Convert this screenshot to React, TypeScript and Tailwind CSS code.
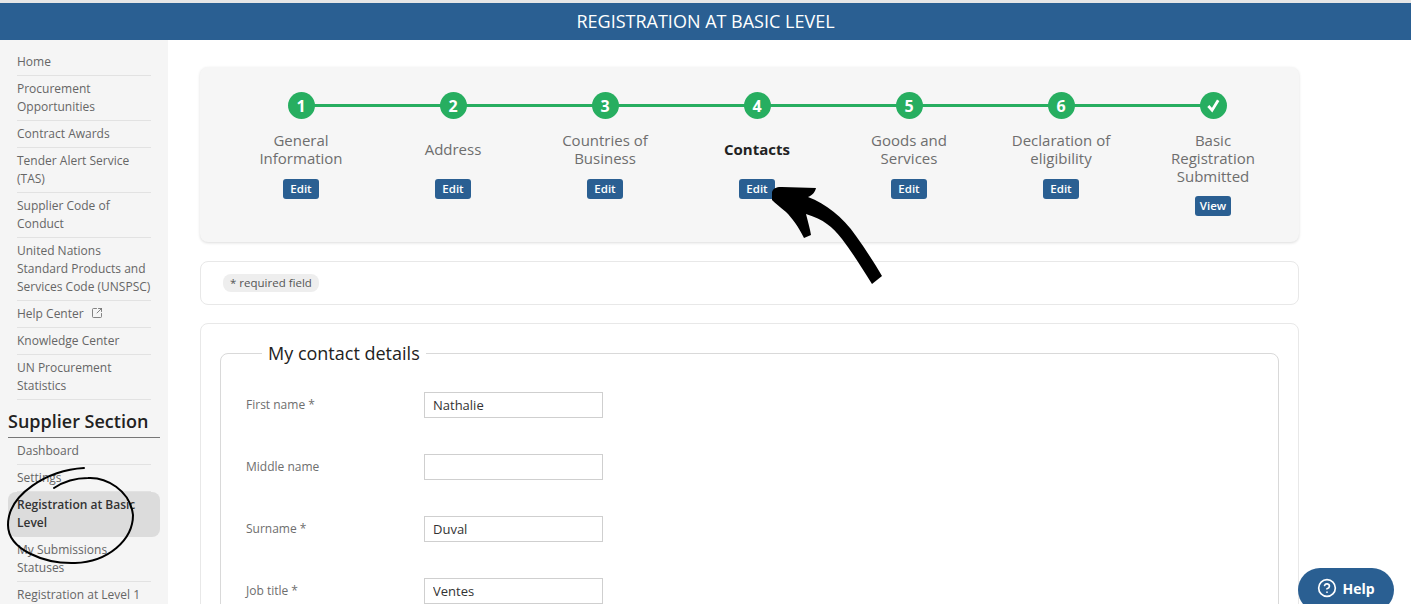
import { CircleHelp, SquareArrowOutUpRight } from "lucide-react";

const topLinks = [
  "Home",
  "Procurement Opportunities",
  "Contract Awards",
  "Tender Alert Service (TAS)",
  "Supplier Code of Conduct",
  "United Nations Standard Products and Services Code (UNSPSC)",
  "Help Center",
  "Knowledge Center",
  "UN Procurement Statistics",
];

const supplierLinks = [
  "Dashboard",
  "Settings",
  "Registration at Basic Level",
  "My Submissions Statuses",
  "Registration at Level 1",
  "Registration at Level 2",
];

const steps = [
  { mark: "1", label: "General Information", action: "Edit" },
  { mark: "2", label: "Address", action: "Edit" },
  { mark: "3", label: "Countries of Business", action: "Edit" },
  { mark: "4", label: "Contacts", action: "Edit", current: true },
  { mark: "5", label: "Goods and Services", action: "Edit" },
  { mark: "6", label: "Declaration of eligibility", action: "Edit" },
  { mark: "check", label: "Basic Registration Submitted", action: "View" },
];

const fields = [
  { label: "First name *", value: "Nathalie" },
  { label: "Middle name", value: "" },
  { label: "Surname *", value: "Duval" },
  { label: "Job title *", value: "Ventes" },
];

function SideLink({ label }: { label: string }) {
  if (label === "Registration at Basic Level") {
    return (
      <li className="rounded-lg bg-[#dcdcdc] px-[9px] py-[4px] pb-[5px] font-semibold text-[#333]">
        {label}
      </li>
    );
  }
  return (
    <li className="mx-[9px] border-b border-[#e2e2e2] py-[4px]">
      {label}
      {label === "Help Center" && (
        <SquareArrowOutUpRight className="ml-[7px] inline-block h-[12px] w-[12px] -translate-y-[2px]" strokeWidth={1.6} />
      )}
    </li>
  );
}

function Sidebar() {
  return (
    <aside className="w-[168px] shrink-0 bg-[#f5f5f5] px-[8px] pt-[9px] text-[12px] leading-[18px] text-[#666]">
      <ul>
        {topLinks.map((label) => (
          <SideLink key={label} label={label} />
        ))}
      </ul>
      <h2 className="mt-[9px] border-b border-[#777] pb-[3px] text-[18px] leading-[25px] font-semibold text-[#222]">
        Supplier Section
      </h2>
      <ul>
        {supplierLinks.map((label) => (
          <SideLink key={label} label={label} />
        ))}
      </ul>
    </aside>
  );
}

function Stepper() {
  return (
    <section className="flex h-[175px] rounded-lg bg-[#f6f6f6] pt-[25px] pl-[25px] shadow-[0_1px_3px_rgba(0,0,0,0.14)]">
      {steps.map((step, i) => (
        <div key={step.mark} className="relative flex w-[152px] flex-col items-center">
          {i < steps.length - 1 && (
            <div className="absolute top-[12px] left-[76px] h-[3px] w-[152px] bg-[#27ae60]" />
          )}
          <div className="relative flex h-[27px] w-[27px] items-center justify-center rounded-full bg-[#27ae60] text-[16px] font-bold text-white">
            {step.mark === "check" ? (
              <svg viewBox="0 0 16 16" className="h-[15px] w-[15px]" fill="none" stroke="white" strokeWidth={3}>
                <path d="M2.5 8.5 L6.5 13 L13 2.5" />
              </svg>
            ) : (
              step.mark
            )}
          </div>
          <div
            className={`mt-[13px] flex min-h-[36px] w-[110px] items-center justify-center text-center text-[15px] leading-[17.8px] ${
              step.current ? "font-bold text-[#222]" : "text-[#6e6e6e]"
            }`}
          >
            {step.label}
          </div>
          <button className="mt-[11px] h-[20px] w-[36px] rounded-[3px] bg-[#2a5f92] text-[11.5px] leading-[20px] font-semibold text-white">
            {step.action}
          </button>
        </div>
      ))}
    </section>
  );
}

function ContactForm() {
  return (
    <section className="mt-[18px] rounded-lg border border-[#e8e8e8] px-[19px] pt-[16px]">
      <fieldset className="rounded-lg border border-[#d9d9d9] px-[25px] pt-[25px]">
        <legend className="ml-[16px] px-[6px] text-[18px] leading-[27px] font-normal text-[#222]">
          My contact details
        </legend>
        {fields.map((field) => (
          <div key={field.label} className="mb-[36px] flex items-center">
            <label className="w-[178px] text-[12px] text-[#6e6e6e]">{field.label}</label>
            <input
              readOnly
              value={field.value}
              className="h-[26px] w-[179px] border border-[#cfcfcf] bg-white px-[8px] text-[13px] text-[#333]"
            />
          </div>
        ))}
      </fieldset>
    </section>
  );
}

// hand drawn notes lying over the page
function Annotations() {
  return (
    <svg className="pointer-events-none absolute inset-0 h-[604px] w-[1411px]" viewBox="0 0 1411 604">
      <path
        d="M772 192 C774 187 778 187 782 187 L816 188 C815 192 813 195 808 197 C826 204 842 216 856 236 C866 250 875 264 882 276 L872 284 C862 268 852 252 842 239 C832 226 824 220 806 214 C808 222 810 229 811 235 L804 238 C798 226 792 218 786 212 C780 207 775 203 772 200 Z"
        fill="#000"
      />
      <path
        d="M84 468 C48 470 8 494 8 525 C8 550 45 564 75 563 C108 562 133 540 133 515 C130 490 106 477 88 478 C76 478 63 482 54 488"
        fill="none"
        stroke="#000"
        strokeWidth={2}
        strokeLinecap="round"
      />
    </svg>
  );
}

export default function App() {
  return (
    <div className="relative h-[604px] w-[1411px] overflow-hidden bg-white font-['Open_Sans',sans-serif]">
      <div className="h-[3px] bg-[#e6e6e6]" />
      <header className="flex h-[37px] items-center justify-center bg-[#2a5f92] text-[18px] text-white">
        REGISTRATION AT BASIC LEVEL
      </header>
      <div className="flex h-[564px] overflow-hidden">
        <Sidebar />
        <main className="w-[1131px] shrink-0 pt-[27px] pl-[32px]">
          <div className="w-[1099px]">
            <Stepper />
            <div className="mt-[19px] flex h-[44px] items-center rounded-lg border border-[#e8e8e8] pl-[22px]">
              <span className="rounded-lg bg-[#eeeeee] px-[7px] text-[11.5px] leading-[18px] text-[#555]">
                * required field
              </span>
            </div>
            <ContactForm />
          </div>
        </main>
      </div>
      <button className="absolute top-[568px] left-[1298px] flex h-[44px] w-[96px] items-start justify-center gap-[5px] rounded-[22px] bg-[#2a5f92] pt-[10px] text-[14px] font-bold text-white">
        <CircleHelp className="h-[20px] w-[20px]" strokeWidth={2} />
        Help
      </button>
      <Annotations />
    </div>
  );
}
